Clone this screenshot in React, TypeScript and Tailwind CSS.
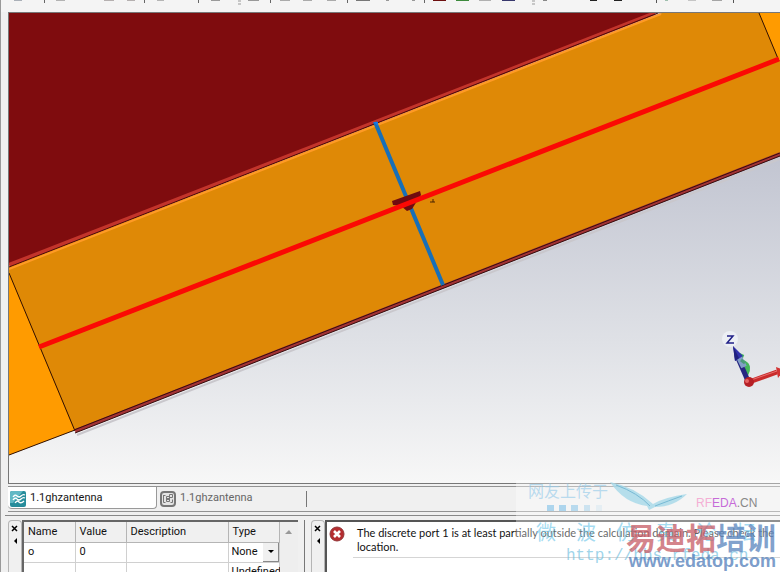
import type { ReactNode } from "react"

const parameters = [
  { name: "o", value: "0", description: "", type: "None" },
]

const toolbarMarks = [
  { left: 14, width: 8, color: "#aab0b8" },
  { left: 44, width: 1, color: "#666666" },
  { left: 56, width: 9, color: "#b3b3b3" },
  { left: 104, width: 10, color: "#b5b0b0" },
  { left: 127, width: 8, color: "#b5b0b0" },
  { left: 144, width: 1, color: "#666666" },
  { left: 157, width: 7, color: "#b5b5b5" },
  { left: 198, width: 1, color: "#666666" },
  { left: 211, width: 9, color: "#9a9a9a" },
  { left: 248, width: 11, color: "#999999" },
  { left: 270, width: 1, color: "#666666" },
  { left: 280, width: 10, color: "#aaaaaa" },
  { left: 303, width: 9, color: "#aaaaaa" },
  { left: 327, width: 9, color: "#aaaaaa" },
  { left: 347, width: 1, color: "#666666" },
  { left: 356, width: 14, color: "#777777" },
  { left: 386, width: 3, color: "#999999" },
  { left: 412, width: 3, color: "#999999" },
  { left: 424, width: 1, color: "#666666" },
  { left: 433, width: 13, color: "#6d1010" },
  { left: 456, width: 13, color: "#3d8a3d" },
  { left: 479, width: 12, color: "#b0b0b0" },
  { left: 502, width: 13, color: "#38386d" },
  { left: 543, width: 4, color: "#888888" },
  { left: 590, width: 7, color: "#222222" },
  { left: 614, width: 8, color: "#222222" },
  { left: 656, width: 1, color: "#555555" },
  { left: 665, width: 3, color: "#9fbfae" },
  { left: 688, width: 8, color: "#c5c5c5" },
  { left: 712, width: 10, color: "#a5a5a5" },
  { left: 733, width: 1, color: "#555555" },
]

function Toolbar() {
  return (
    <header className="h-3 shrink-0 overflow-hidden bg-[#f4f4f4]">
      <svg className="block h-3 w-[780px]" viewBox="1 0 780 12" aria-hidden="true">
        {toolbarMarks.map((mark) => (
          <rect key={mark.left} x={mark.left} y="0" width={mark.width} height={mark.width === 1 ? 3 : 1} fill={mark.color} />
        ))}
        <path d="M238 1h3M238 4h3M532 1h3M532 4h3" stroke="#999999" />
      </svg>
    </header>
  )
}

function Viewport() {
  return (
    <main className="ml-[7px] h-[472px] shrink-0 overflow-hidden border-y border-l border-[#777777] bg-[#f7f7f7]">
      <svg className="block h-[470px] w-full" viewBox="9 13 771 470" preserveAspectRatio="xMinYMin slice" aria-label="Antenna model">
        <defs>
          <linearGradient id="backdrop" x1="0" y1="0" x2="0" y2="1">
            <stop offset="0" stopColor="#abb1c4" />
            <stop offset="0.32" stopColor="#c3c6d2" />
            <stop offset="0.7" stopColor="#dfe1e6" />
            <stop offset="1" stopColor="#f7f7f7" />
          </linearGradient>
        </defs>
        <rect x="9" y="13" width="1200" height="470" fill="url(#backdrop)" />
        <path d="M9 13H655L9 265Z" fill="#7f0c0e" />
        <path d="M9 267L662 13H780V153L75 430L9 455Z" fill="#df8906" />
        <path d="M9 273L74 430L9 455ZM759 13H780V62Z" fill="#ff9b00" />
        <path d="M9 265L655 13" stroke="#c3342b" strokeWidth="4" />
        <path d="M9 267L658 13" stroke="#4b0a06" strokeWidth="1" />
        <path d="M9 269L661 14" stroke="#ff9a25" strokeWidth="2" />
        <path d="M9 273L75 431M759 13L779 61M9 455L75 430" stroke="#321000" strokeWidth="1" fill="none" />
        <path d="M77 435L780 159" stroke="#c9c7cc" strokeWidth="2" />
        <path d="M75 431L780 154" stroke="#a33336" strokeWidth="4" />
        <path d="M74 430L780 153M75 433L780 156" stroke="#350c0c" strokeWidth="1" />
        <path d="M375 122L443 285" stroke="#176fb8" strokeWidth="4" />
        <path d="M373 122h5v4z" fill="#1679e8" />
        <path d="M392 201L420 191L421 195L417 201L412 209L407 211L401 206L393 205Z" fill="#700b10" />
        <path d="M39 347L779 59" stroke="#fb0904" strokeWidth="5" />
        <path d="M430 202h5M433 199v3" stroke="#4b2500" />
        <circle cx="730" cy="339" r="8" fill="#eceff4" />
        <path d="M727 336h6l-6 7h7" stroke="#202087" strokeWidth="1.5" fill="none" />
        <path d="M742 354q-4 8 2 9q6 3 2 11" stroke="#45b75a" strokeWidth="5" fill="none" />
        <path d="M738 358L748 381" stroke="#262681" strokeWidth="5" />
        <path d="M739 357L744 367" stroke="#829fc7" strokeWidth="6" />
        <path d="M741 360l4 3" stroke="#4c9b79" strokeWidth="3" />
        <path d="M733 346L743 356L735 361Z" fill="#3131ad" />
        <path d="M733 346L739 358L735 361Z" fill="#20207e" />
        <path d="M749 382L777 372" stroke="#c92b2b" strokeWidth="5" />
        <path d="M751 380L777 371" stroke="#e87070" strokeWidth="1" />
        <path d="M776 367L784 370L778 378Z" fill="#d33333" />
        <circle cx="749" cy="382" r="5" fill="#b62026" />
        <circle cx="747" cy="381" r="2" fill="#e76464" />
      </svg>
    </main>
  )
}

function WaveIcon() {
  return (
    <svg className="size-4 shrink-0" viewBox="0 0 16 16" aria-hidden="true">
      <rect width="16" height="16" rx="2" fill="#268c9b" />
      <path d="M0 2q0-2 2-2h11L3 12H0Z" fill="#61b8c5" />
      <path d="M3 6q2-3 4-1t4 0t4-1M3 9q2-3 4-1t4 0t4-1M5 12q2-3 4-1t5-1" stroke="white" strokeWidth="1.3" fill="none" />
    </svg>
  )
}

function SchematicIcon() {
  return (
    <svg className="size-4 shrink-0" viewBox="0 0 16 16" fill="none" stroke="#777777" aria-hidden="true">
      <rect x="1" y="1" width="14" height="14" rx="3" fill="#e4e4e4" strokeWidth="2" />
      <path d="M3.5 4.5h2M3.5 4v7.5h2M6.5 5.5h3v5h-3zM9.5 3.5h3v3h-3zM10.5 11.5h2v-3" />
      <path d="M8 7v2" strokeWidth="2" />
    </svg>
  )
}

function DocumentTabs() {
  return (
    <nav className="ml-[7px] mt-0.5 flex h-[26px] shrink-0 border-y border-[#929292] bg-[#f0f0f0]">
      <button className="flex h-[22px] w-[149px] items-center gap-1 rounded-b-sm border-b border-r border-[#999999] bg-white pl-0.5 pt-0.5 text-[#151515]">
        <WaveIcon />
        <span>1.1ghzantenna</span>
      </button>
      <button className="flex h-[22px] w-[149px] items-center gap-1 pl-[3px] pt-px text-[#666666]">
        <SchematicIcon />
        <span>1.1ghzantenna</span>
      </button>
      <span className="mt-1 h-4 w-px bg-[#777777]" />
    </nav>
  )
}

function DockHandle() {
  return (
    <div className="flex w-[14px] shrink-0 flex-col items-center gap-1 rounded-t-sm border border-b-0 border-[#b5b5b5] pt-1">
      <button aria-label="Close panel">
        <svg className="block size-2" viewBox="0 0 8 8"><path d="M1 1l5 5M6 1L1 6" stroke="black" strokeWidth="1.5" /></svg>
      </button>
      <button aria-label="Collapse panel">
        <svg className="block size-2" viewBox="0 0 8 8"><path d="M6 1v6L3 4Z" fill="black" /></svg>
      </button>
    </div>
  )
}

function Panel({ children, className }: { children: ReactNode; className: string }) {
  return (
    <section className={className}>
      <DockHandle />
      {children}
    </section>
  )
}

function ParameterTable() {
  return (
    <div className="flex min-w-0 flex-1 overflow-hidden border-l-2 border-t-2 border-[#666666]">
      <table className="h-fit w-[256px] shrink-0 table-fixed border-collapse bg-white text-left">
        <thead className="bg-[#f0f0f0]">
          <tr className="h-5">
            <th className="w-[51px] border-b border-r border-[#b5b5b5] pl-1 font-normal">Name</th>
            <th className="w-[51px] border-b border-r border-[#b5b5b5] pl-1 font-normal">Value</th>
            <th className="w-[102px] border-b border-r border-[#b5b5b5] pl-1 font-normal">Description</th>
            <th className="border-b border-r border-[#b5b5b5] pl-1 font-normal">Type</th>
          </tr>
        </thead>
        <tbody>
          {parameters.map((parameter) => (
            <tr key={parameter.name} className="h-5">
              <td className="border-b border-r border-[#d0d0d0] pl-1">{parameter.name}</td>
              <td className="border-b border-r border-[#d0d0d0] pl-1">{parameter.value}</td>
              <td className="border-b border-r border-[#d0d0d0] pl-1">{parameter.description}</td>
              <td className="relative border-b border-r border-[#d0d0d0]">
                <select aria-label="Parameter type" className="block h-[19px] w-full appearance-none pl-[3px]" defaultValue={parameter.type}>
                  <option>None</option>
                  <option>Undefined</option>
                </select>
                <span className="pointer-events-none absolute inset-y-0 right-0 flex w-4 items-center justify-center border-b border-r border-[#888888] bg-[#f0f0f0]">
                  <svg className="h-1 w-2" viewBox="0 0 8 4"><path d="M1 0h6L4 3Z" fill="black" /></svg>
                </span>
              </td>
            </tr>
          ))}
          <tr className="h-5">
            <td className="border-r border-[#d0d0d0]" />
            <td className="border-r border-[#d0d0d0]" />
            <td className="border-r border-[#d0d0d0]" />
            <td className="border-r border-[#d0d0d0] pl-[3px]">Undefined</td>
          </tr>
        </tbody>
      </table>
      <button aria-label="Scroll up" className="flex flex-1 justify-center bg-[#eeeeee] pt-2">
        <svg className="h-1 w-2" viewBox="0 0 8 4"><path d="M0 4h7L4 0Z" fill="#999999" /></svg>
      </button>
    </div>
  )
}

function MessageList() {
  return (
    <div className="flex min-w-0 flex-1 gap-2 border-l-2 border-t-2 border-[#555555] bg-white pl-0.5 pt-1">
      <svg className="size-4 shrink-0" viewBox="0 0 16 16" aria-label="Error">
        <circle cx="8" cy="8" r="7" fill="#b52d30" stroke="#923638" />
        <path d="M5 5l6 6M11 5l-6 6" stroke="white" strokeWidth="2.6" />
      </svg>
      <div className="h-8 flex-1 border-b border-[#d5d5d5] pl-1 leading-[14px]">
        <p className="max-w-[424px] font-[Lato,sans-serif]">The discrete port 1 is at least partially outside the calculation domain. Please check the location.</p>
      </div>
    </div>
  )
}

function Watermark() {
  return (
    <aside className="pointer-events-none absolute bottom-0 right-0 h-24 w-[264px] overflow-hidden">
      <div className="absolute inset-x-0 top-1 h-16 bg-white/35" />
      <svg className="absolute left-[94px] top-[5px] h-9 w-20" viewBox="0 0 80 36" aria-hidden="true">
        <path d="M0 1Q25 6 43 23Q55 16 77 13Q64 26 45 26L39 29L37 25Q14 22 0 1Z" fill="#a5d8e9" fillOpacity="0.8" />
        <path d="M6 4Q28 12 40 25M45 25Q58 20 72 15" stroke="#78bad5" fill="none" />
      </svg>
      <svg className="absolute left-[31px] top-7 h-2 w-16" viewBox="0 0 64 8" fill="#8fc8e9" aria-hidden="true">
        <path d="M0 1h7v6H0zM12 1h7v6h-7z" fillOpacity="0.7" />
        <path d="M24 1h7v6h-7z" fillOpacity="0.6" />
        <path d="M37 1h6v6h-6z" fillOpacity="0.4" />
        <path d="M49 1h6v6h-6z" fillOpacity="0.15" />
      </svg>
      <p className="absolute left-3 top-0.5 font-['Noto_Sans_CJK_SC',sans-serif] text-base leading-6 text-[#8fc8e9]/60">网友上传于</p>
      <p className="absolute left-[180px] top-[19px] font-['Liberation_Sans',sans-serif] text-xs text-[#c66bd8]"><span className="text-[#f4afd4]">RF</span>EDA<span className="text-[#888888]">.CN</span></p>
      <p className="absolute left-5 top-[42px] flex gap-5 font-['Noto_Sans_CJK_SC',sans-serif] text-xl leading-7 text-[#67c4e8]/60">
        <span>微</span><span>波</span><span>仿</span><span>真</span><span>论</span><span>坛</span>
      </p>
      <p className="absolute left-[50px] top-[68px] font-['Liberation_Mono',monospace] text-base text-[#75c2df]/70">http://bbs.rfeda.cn</p>
      <p className="absolute right-1 top-[42px] whitespace-nowrap font-['Noto_Sans_CJK_SC',sans-serif] text-[30px] font-bold leading-9 text-[#c65b65]/75">易迪拓<span className="text-[#5984bd]/75">培训</span></p>
      <p className="absolute right-1 top-[75px] font-['Liberation_Sans',sans-serif] text-lg font-bold leading-5 text-[#5984bd]/80">www.edatop.com</p>
    </aside>
  )
}

export default function App() {
  return (
    <div className="relative flex h-screen flex-col overflow-hidden border-l border-[#999999] bg-[#f0f0f0] font-[Roboto,Arial,sans-serif] text-[11px] text-[#111111]">
      <Toolbar />
      <Viewport />
      <DocumentTabs />
      <div className="ml-1 mt-[3px] border-t border-[#888888]" />
      <div className="ml-[7px] flex min-h-0 flex-1 pt-1">
        <Panel className="flex w-[290px] shrink-0">
          <ParameterTable />
        </Panel>
        <div className="ml-1.5 w-px bg-[#777777]" />
        <Panel className="ml-1.5 flex min-w-0 flex-1">
          <MessageList />
        </Panel>
      </div>
      <Watermark />
    </div>
  )
}
